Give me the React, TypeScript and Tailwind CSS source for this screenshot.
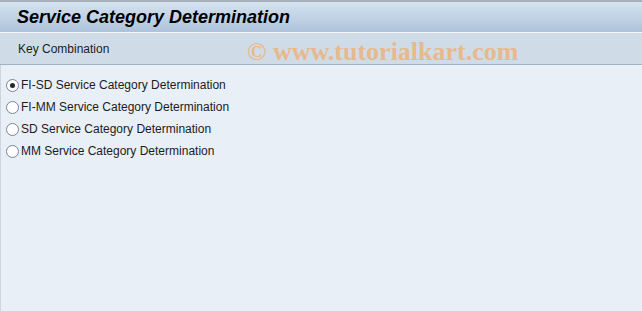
import React from 'react';

const options = [
  'FI-SD Service Category Determination',
  'FI-MM Service Category Determination',
  'SD Service Category Determination',
  'MM Service Category Determination',
];

function Radio({ checked }: { checked?: boolean }) {
  return (
    <span className="flex h-[13px] w-[13px] items-center justify-center rounded-full border border-[#7a8594] bg-white">
      {checked ? <span className="h-[5px] w-[5px] rounded-full bg-[#1e2833]" /> : null}
    </span>
  );
}

export default function App() {
  return (
    <div className="flex h-[311px] w-[642px] flex-col overflow-hidden bg-[#e8eff7] font-['Liberation_Sans',Arial,sans-serif]">
      <div className="h-[2px] bg-[#a7b0bd]" />
      <div className="flex h-[30px] items-center bg-gradient-to-b from-[#d6e3ef] to-[#adc3dc] pl-[17px]">
        <span className="text-[18px] font-bold italic text-black">Service Category Determination</span>
      </div>
      <div className="h-px bg-[#f2f6fa]" />
      <div className="flex h-[32px] items-center border-b border-[#a6b1be] bg-[#cfdce7] pl-[18px]">
        <span className="w-[229px] text-[12px] text-[#1c1c1c]">Key Combination</span>
        <span className="pt-[6px] font-['Liberation_Serif',serif] text-[26px] font-bold leading-none text-[#e7b98c]">
          © www.tutorialkart.com
        </span>
      </div>
      <div className="flex flex-1 flex-col border-l border-[#cfd5de] pt-[9px] pl-[5px]">
        {options.map((label, i) => (
          <div key={label} className="flex h-[22px] items-center gap-[2px]">
            <Radio checked={i === 0} />
            <span className="text-[12px] text-[#1c1c1c]">{label}</span>
          </div>
        ))}
      </div>
    </div>
  );
}
